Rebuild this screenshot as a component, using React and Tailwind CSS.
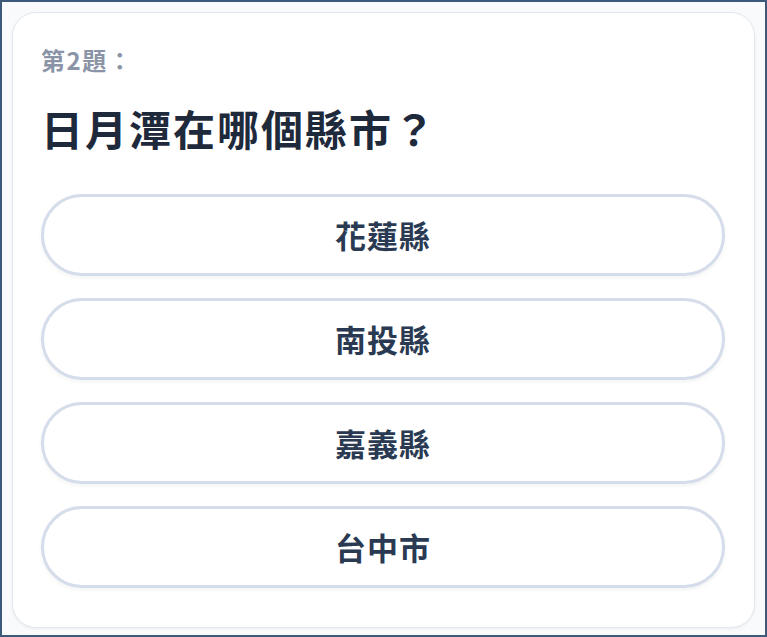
export default function App() {
  const options = ["花蓮縣", "南投縣", "嘉義縣", "台中市"];
  return (
    <div
      className="h-[637px] w-[767px] border-2 border-[#3d5a7c] bg-[#f8fafc] pt-[10px] pl-[10px] pr-[10px]"
      style={{ fontFamily: '"Noto Sans CJK TC", "Noto Sans", sans-serif' }}
    >
      <div className="h-[616px] rounded-[24px] border border-[#e2e8f0] bg-white pl-[28px] pr-[29px] pt-[31px] shadow-[0_1px_3px_rgba(15,23,42,0.06)]">
        <div className="text-[24px] font-bold leading-[32px] tracking-[1.5px] text-[#8a94a6]">第2題：</div>
        <h1 className="mt-[26px] text-[42px] font-bold leading-[52px] tracking-[2px] text-[#1e293b]">
          日月潭在哪個縣市？
        </h1>
        <div className="mt-[40px] flex flex-col gap-[22px]">
          {options.map((o) => (
            <button
              key={o}
              className="flex h-[82px] w-full items-center justify-center rounded-full border-[3px] border-[#d5ddea] bg-white text-[31px] font-bold tracking-[1px] text-[#2a3a52] shadow-[0_2px_4px_rgba(15,23,42,0.05)]"
            >
              {o}
            </button>
          ))}
        </div>
      </div>
    </div>
  );
}
